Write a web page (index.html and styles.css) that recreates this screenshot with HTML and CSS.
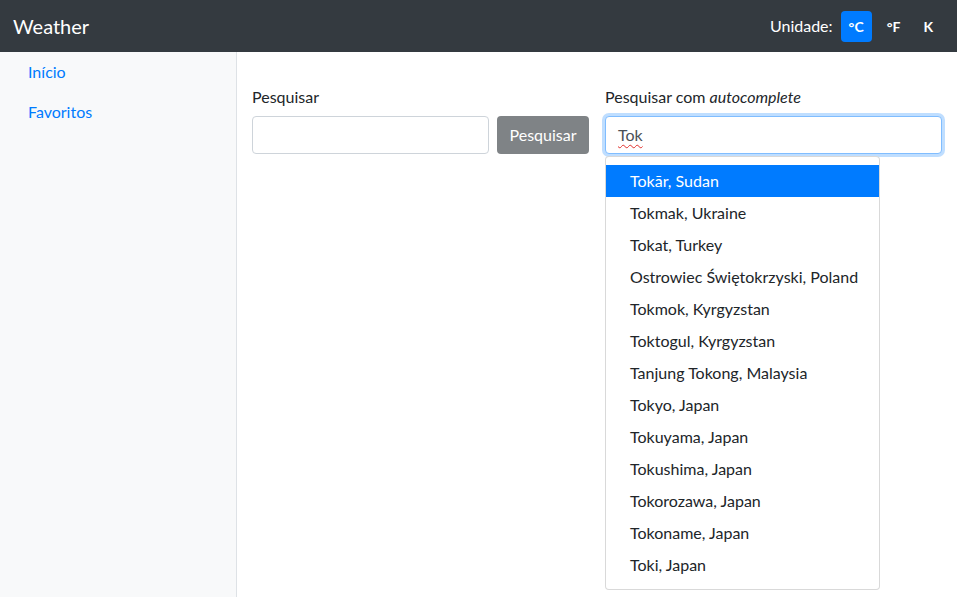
FILE: index.html
```html
<!DOCTYPE html>
<html lang="pt">
<head>
<meta charset="utf-8">
<title>Weather</title>
<link rel="stylesheet" href="styles.css">
</head>
<body>
<header class="navbar">
  <a class="brand" href="#">Weather</a>
  <div class="units">
    <span class="units-label">Unidade:</span>
    <button class="unit active">°C</button>
    <button class="unit">°F</button>
    <button class="unit">K</button>
  </div>
</header>
<div class="layout">
  <nav class="sidebar">
    <a class="nav-link" href="#">Início</a>
    <a class="nav-link" href="#">Favoritos</a>
  </nav>
  <main class="main">
    <div class="row">
      <div class="col">
        <label class="label">Pesquisar</label>
        <div class="search-group">
          <input class="form-control" type="text">
          <button class="btn-search">Pesquisar</button>
        </div>
      </div>
      <div class="col">
        <label class="label">Pesquisar com <em>autocomplete</em></label>
        <div class="ac">
          <div class="form-control focused"><span class="misspelled">Tok</span></div>
          <ul class="dropdown">
            <li class="dropdown-item active">Tokār, Sudan</li>
            <li class="dropdown-item">Tokmak, Ukraine</li>
            <li class="dropdown-item">Tokat, Turkey</li>
            <li class="dropdown-item">Ostrowiec Świętokrzyski, Poland</li>
            <li class="dropdown-item">Tokmok, Kyrgyzstan</li>
            <li class="dropdown-item">Toktogul, Kyrgyzstan</li>
            <li class="dropdown-item">Tanjung Tokong, Malaysia</li>
            <li class="dropdown-item">Tokyo, Japan</li>
            <li class="dropdown-item">Tokuyama, Japan</li>
            <li class="dropdown-item">Tokushima, Japan</li>
            <li class="dropdown-item">Tokorozawa, Japan</li>
            <li class="dropdown-item">Tokoname, Japan</li>
            <li class="dropdown-item">Toki, Japan</li>
          </ul>
        </div>
      </div>
    </div>
  </main>
</div>
</body>
</html>
```

FILE: styles.css
```css
* { box-sizing: border-box; }
html, body { margin: 0; height: 100%; }
body {
  font-family: "Lato", "Open Sans", sans-serif;
  font-size: 16px;
  line-height: 1.5;
  color: #212529;
  background: #fff;
  display: flex;
  flex-direction: column;
  overflow: hidden;
}
.navbar {
  height: 52px;
  flex: none;
  background: #343a40;
  display: flex;
  align-items: center;
  justify-content: space-between;
  padding: 0 16px 0 13px;
}
.brand {
  color: #fff;
  font-size: 20px;
  text-decoration: none;
}
.units {
  display: flex;
  align-items: center;
  gap: 7px;
}
.units-label { color: #fff; margin-right: 1px; }
.unit {
  font-family: inherit;
  font-weight: 700;
  font-size: 14px;
  line-height: 21px;
  padding: 5px 8px;
  border: 0;
  border-radius: 4px;
  background: transparent;
  color: #fff;
}
.unit.active { background: #007bff; }
.layout { flex: 1; display: flex; min-height: 0; }
.sidebar {
  width: 237px;
  flex: none;
  background: #f8f9fa;
  border-right: 1px solid #dee2e6;
  padding: 0 12px;
  display: flex;
  flex-direction: column;
}
.nav-link {
  color: #007bff;
  text-decoration: none;
  padding: 8px 16px;
}
.main { flex: 1; padding: 33px 15px 0; }
.row {
  display: grid;
  grid-template-columns: 1fr 1fr;
  gap: 16px;
}
.label { display: block; margin-bottom: 7px; }
.search-group { display: flex; gap: 8px; }
.form-control {
  display: block;
  width: 100%;
  height: 38px;
  padding: 6px 12px;
  font: inherit;
  color: #495057;
  background: #fff;
  border: 1px solid #ced4da;
  border-radius: 4px;
}
.search-group .form-control { flex: 1; }
.btn-search {
  flex: none;
  width: 92px;
  height: 38px;
  font: inherit;
  color: #fff;
  background: #7f8386;
  border: 0;
  border-radius: 4px;
}
.focused {
  border-color: #80bdff;
  box-shadow: 0 0 0 3px rgba(0, 123, 255, .25);
}
.misspelled {
  text-decoration: underline wavy #e0302c;
  text-decoration-thickness: 1px;
  text-underline-offset: 3px;
}
.ac { position: relative; }
.dropdown {
  position: absolute;
  top: 40px;
  left: 0;
  width: 275px;
  margin: 0;
  padding: 8px 0;
  list-style: none;
  background: #fff;
  border: 1px solid rgba(0, 0, 0, .15);
  border-radius: 4px;
}
.dropdown-item {
  padding: 4px 24px;
  color: #212529;
  white-space: nowrap;
}
.dropdown-item.active { background: #007bff; color: #fff; }
```
